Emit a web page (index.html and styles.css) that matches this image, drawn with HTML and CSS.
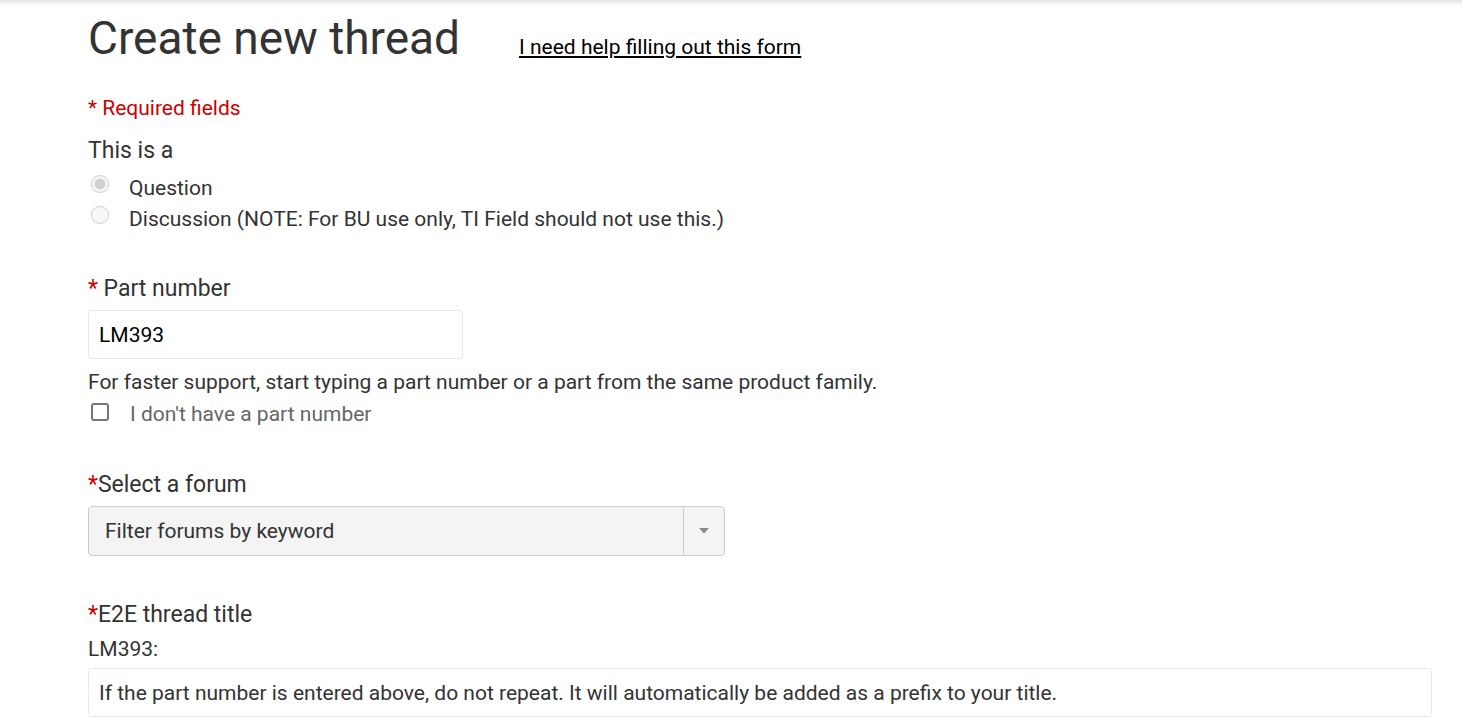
FILE: index.html
```html
<!DOCTYPE html>
<html lang="en">
<head>
  <meta charset="UTF-8" />
  <title>Create new thread</title>
  <link rel="stylesheet" href="styles.css">
</head>
<body>
<div class="topbar"></div>

<div class="page">
  <div class="page-head">
    <h1>Create new thread</h1>
    <a href="#" class="help-link">I need help filling out this form</a>
  </div>

  <form class="thread-form">
    <p class="required-note">* Required fields</p>

    <div class="field field-type">
      <div class="field-label">This is a</div>
      <label class="radio-row">
        <input type="radio" name="kind" checked disabled>
        <span>Question</span>
      </label>
      <label class="radio-row">
        <input type="radio" name="kind" disabled>
        <span>Discussion (NOTE: For BU use only, TI Field should not use this.)</span>
      </label>
    </div>

    <div class="field field-part">
      <div class="field-label"><span class="req">*</span> Part number</div>
      <input type="text" class="text-input part-input" value="LM393">
      <div class="hint">For faster support, start typing a part number or a part from the same product family.</div>
      <label class="check-row">
        <span class="checkbox"></span>
        <span>I don't have a part number</span>
      </label>
    </div>

    <div class="field field-forum">
      <div class="field-label"><span class="req">*</span>Select a forum</div>
      <div class="select-box">
        <span class="select-text">Filter forums by keyword</span>
        <span class="select-arrow">
          <svg width="10" height="6" viewBox="0 0 10 6"><path d="M0 0h10L5 5.5z" fill="#888"/></svg>
        </span>
      </div>
    </div>

    <div class="field field-title">
      <div class="field-label"><span class="req">*</span>E2E thread title</div>
      <div class="prefix">LM393:</div>
      <div class="text-input title-input">If the part number is entered above, do not repeat. It will automatically be added as a prefix to your title.</div>
    </div>
  </form>
</div>
</body>
</html>
```

FILE: styles.css
```css
html, body {
  margin: 0;
  padding: 0;
  background: #fff;
  font-family: Roboto, "Liberation Sans", sans-serif;
  color: #333;
  overflow: hidden;
}
.topbar {
  height: 6px;
  background: linear-gradient(#e4e4e4, #fff);
}
.page {
  padding-left: 88px;
  padding-right: 30px;
}
.page-head {
  display: flex;
  align-items: baseline;
  gap: 59px;
  margin-top: 4px;
}
.page-head h1 {
  margin: 0;
  font-size: 46px;
  font-weight: 400;
  line-height: 56px;
  color: #333;
}
.help-link {
  font-size: 21px;
  color: #000;
  text-decoration: underline;
}
.required-note {
  margin: 28px 0 0;
  font-size: 21px;
  line-height: 28px;
  color: #cc0000;
}
.field-label {
  padding-top: 2px;
  font-size: 23px;
  line-height: 30px;
  color: #333;
}
.req {
  color: #cc0000;
}
.field-type {
  margin-top: 12px;
}
.field-type .field-label {
  margin-bottom: 6px;
}
.radio-row {
  display: flex;
  align-items: center;
  gap: 20px;
  height: 31px;
  font-size: 21px;
  color: #333;
}
.radio-row input {
  margin: 0 0 0 3px;
  width: 18px;
  height: 18px;
  position: relative;
  top: -4px;
}
.field-part {
  margin-top: 38px;
}
.text-input {
  box-sizing: border-box;
  height: 49px;
  border: 1px solid #e8e8e8;
  border-radius: 4px;
  font-family: inherit;
  font-size: 21px;
  color: #000;
  padding: 0 10px;
  background: #fff;
}
.part-input {
  display: block;
  width: 375px;
  margin-top: 6px;
}
.hint {
  margin-top: 9px;
  font-size: 21px;
  line-height: 28px;
  color: #333;
}
.check-row {
  display: flex;
  align-items: center;
  gap: 21px;
  height: 28px;
  margin-top: 4px;
  font-size: 21px;
  color: #666;
}
.checkbox {
  box-sizing: border-box;
  width: 18px;
  height: 18px;
  margin-left: 3px;
  border: 2px solid #767676;
  border-radius: 3px;
  position: relative;
  top: -2px;
}
.field-forum {
  margin-top: 40px;
}
.select-box {
  box-sizing: border-box;
  display: flex;
  align-items: center;
  width: 637px;
  height: 50px;
  margin-top: 6px;
  background: #f4f4f4;
  border: 1px solid #ccc;
  border-radius: 4px;
}
.select-text {
  flex: 1;
  padding-left: 16px;
  font-size: 21px;
  color: #333;
}
.select-arrow {
  display: flex;
  align-items: center;
  justify-content: center;
  width: 40px;
  height: 100%;
  border-left: 1px solid #ccc;
}
.field-title {
  margin-top: 42px;
}
.prefix {
  margin-top: 6px;
  font-size: 21px;
  line-height: 26px;
  color: #333;
}
.title-input {
  display: flex;
  align-items: center;
  margin-top: 6px;
  width: 1344px;
  color: #333;
}
```
